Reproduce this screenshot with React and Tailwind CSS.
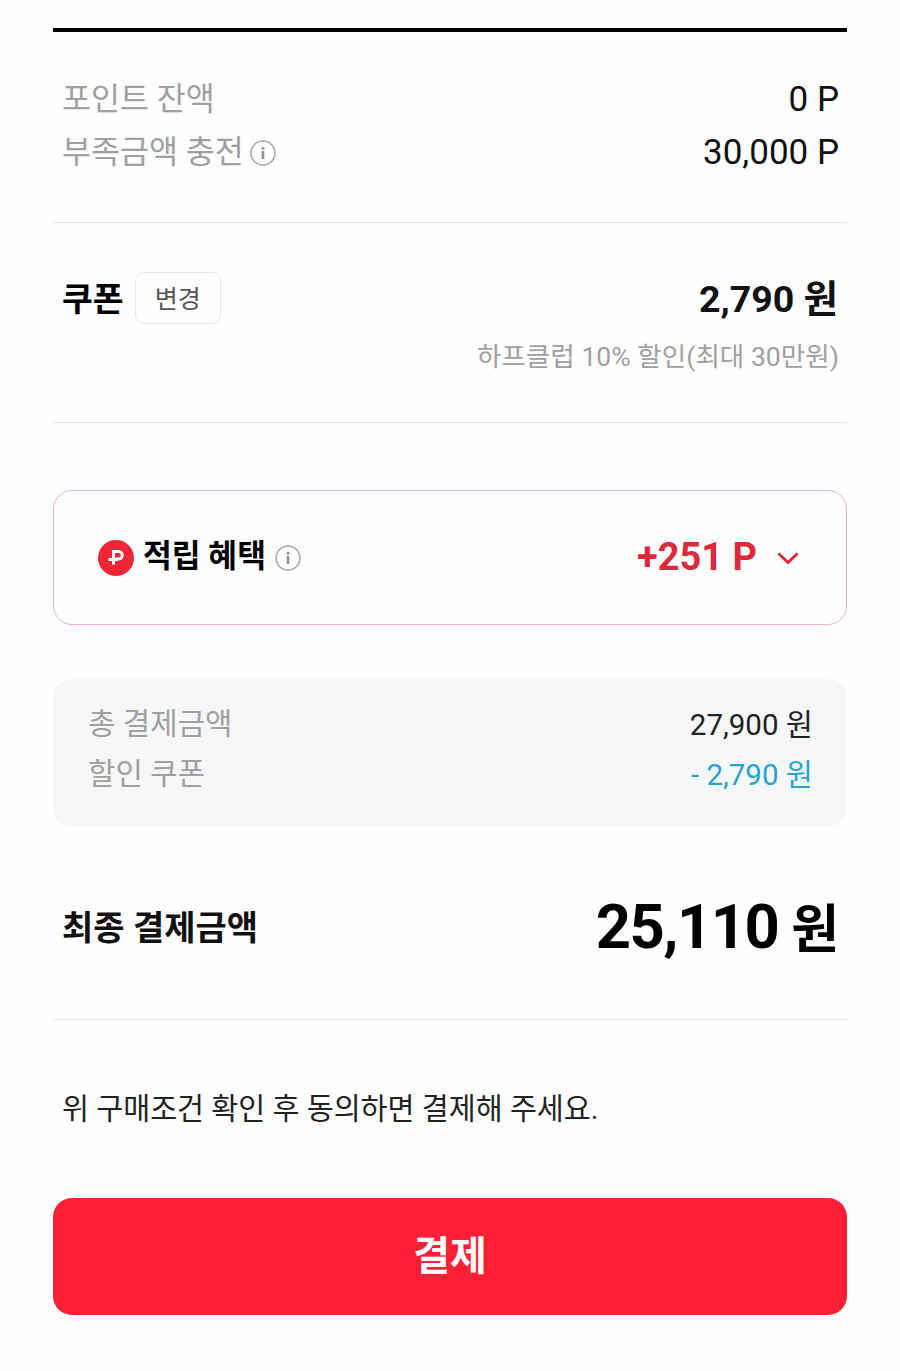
const font = { fontFamily: 'Roboto, "Noto Sans CJK KR", sans-serif' };

const InfoIcon = ({ className }) => (
  <svg viewBox="0 0 26 26" className={className} fill="none">
    <circle cx="13" cy="13" r="12" stroke="#a8a8a8" strokeWidth="1.500" />
    <circle cx="13" cy="8.200" r="1.500" fill="#909090" />
    <rect x="11.700" y="11" width="2.600" height="8" fill="#909090" />
  </svg>
);

const PointIcon = () => (
  <svg viewBox="0 0 36 36" className="w-9 h-9 shrink-0">
    <circle cx="18" cy="18" r="18" fill="#ee2737" />
    <path d="M15.500 11.500h5a3.800 3.800 0 0 1 0 7.600h-5zM15.500 11.500v13M10.500 19.500h9" fill="none" stroke="#fff" strokeWidth="3" />
  </svg>
);

export default function App() {
  return (
    <div style={font} className="w-[900px] h-[1371px] bg-[#fefefe] px-[53px] pt-[28px] overflow-hidden">
      <div className="h-1 bg-black" />

      <div className="pl-[9px] pr-[8px] pt-[41px] pb-[43px] border-b border-[#e6e6e6]">
        <div className="flex justify-between items-center h-[53px]">
          <span className="text-[31.500px] text-[#a0a0a0]">포인트 잔액</span>
          <span className="text-[35px] text-[#111] translate-y-[1px]">0 P</span>
        </div>
        <div className="flex justify-between items-center h-[53px]">
          <span className="flex items-center gap-[6px] text-[31.500px] text-[#a0a0a0]">
            부족금액 충전
            <InfoIcon className="w-[26px] h-[26px]" />
          </span>
          <span className="text-[35px] text-[#111] translate-y-[1px]">30,000 P</span>
        </div>
      </div>

      <div className="pl-[9px] pr-[9px] pt-[49px] pb-[47px] border-b border-[#e6e6e6]">
        <div className="flex justify-between items-center h-[52px]">
          <div className="flex items-center gap-[11px]">
            <span className="text-[33.500px] font-bold text-black translate-y-[2px]">쿠폰</span>
            <span className="w-[86px] h-[52px] flex items-center justify-center rounded-[9px] border border-[#e8e8e8] text-[25px] text-[#555] pt-[4px]">변경</span>
          </div>
          <span className="text-[37.500px] font-bold text-[#111] translate-y-[1px]">2,790 원</span>
        </div>
        <div className="mt-[15px] mr-[-1px] text-right text-[26.600px] leading-[36px] text-[#a0a0a0]">하프클럽 10% 할인(최대 30만원)</div>
      </div>

      <div className="mt-[67px] h-[135px] rounded-[19px] border-[1.500px] border-[#eab4b9] pl-[44px] pr-[47px] flex items-center justify-between">
        <div className="flex items-center gap-[9px]">
          <PointIcon />
          <span className="text-[31.300px] font-bold text-black">적립 혜택</span>
          <InfoIcon className="w-[26px] h-[26px]" />
        </div>
        <div className="flex items-center gap-[20px] text-[#dc2a3c]">
          <span className="text-[38px] font-bold">+251 P</span>
          <svg viewBox="0 0 22 12" className="w-[22px] h-[12px]" fill="none" stroke="currentColor" strokeWidth="3">
            <path d="M1.500 1.500l9.500 9 9.500-9" />
          </svg>
        </div>
      </div>

      <div className="mt-[54px] h-[148px] rounded-[19px] bg-[#f6f7f9] pl-[35px] pr-[34px] pt-[20px]">
        <div className="flex justify-between items-center h-[50px]">
          <span className="text-[29.800px] text-[#a0a0a0]">총 결제금액</span>
          <span className="text-[29.500px] text-[#222] translate-y-[1px]">27,900 원</span>
        </div>
        <div className="flex justify-between items-center h-[50px]">
          <span className="text-[29.800px] text-[#a0a0a0]">할인 쿠폰</span>
          <span className="text-[29.500px] text-[#2aa3cf] translate-y-[1px]">- 2,790 원</span>
        </div>
      </div>

      <div className="pl-[9px] pr-[8px] pt-[8px] h-[193px] border-b border-[#e6e6e6] flex justify-between items-center">
        <span className="text-[34px] font-bold text-[#111] translate-y-[1px]">최종 결제금액</span>
        <span className="flex items-baseline gap-[13px] font-bold text-black">
          <span className="text-[61.500px] tracking-tight">25,110</span>
          <span className="text-[52px]">원</span>
        </span>
      </div>

      <div className="pl-[9px] mt-[65px] text-[29.300px] leading-[48px] text-[#222]">위 구매조건 확인 후 동의하면 결제해 주세요.</div>

      <button className="mt-[65px] w-full h-[117px] rounded-[19px] bg-[#ff2037] text-white text-[40px] font-bold">결제</button>
    </div>
  );
}
